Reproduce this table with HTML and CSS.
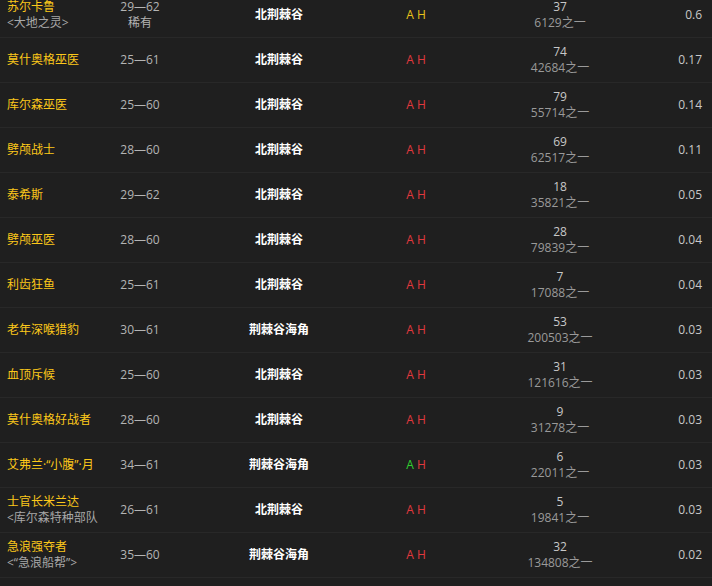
FILE: index.html
```html
<!DOCTYPE html>
<html lang="zh-CN">
<head>
  <meta charset="UTF-8">
  <title>掉落来源</title>
  <link rel="stylesheet" href="styles.css">
</head>
<body>
  <div class="list">
    <table class="drops">
      <tr class="first">
        <td class="name">苏尔卡鲁<div class="sub">&lt;大地之灵&gt;</div></td>
        <td class="level">29—62<div class="sub">稀有</div></td>
        <td class="zone">北荆棘谷</td>
        <td class="react"><span class="y">A</span> <span class="y">H</span></td>
        <td class="count">37<div class="sub">6129之一</div></td>
        <td class="pct">0.6</td>
      </tr>
      <tr>
        <td class="name">莫什奥格巫医</td>
        <td class="level">25—61</td>
        <td class="zone">北荆棘谷</td>
        <td class="react"><span class="r">A</span> <span class="r">H</span></td>
        <td class="count">74<div class="sub">42684之一</div></td>
        <td class="pct">0.17</td>
      </tr>
      <tr>
        <td class="name">库尔森巫医</td>
        <td class="level">25—60</td>
        <td class="zone">北荆棘谷</td>
        <td class="react"><span class="r">A</span> <span class="r">H</span></td>
        <td class="count">79<div class="sub">55714之一</div></td>
        <td class="pct">0.14</td>
      </tr>
      <tr>
        <td class="name">劈颅战士</td>
        <td class="level">28—60</td>
        <td class="zone">北荆棘谷</td>
        <td class="react"><span class="r">A</span> <span class="r">H</span></td>
        <td class="count">69<div class="sub">62517之一</div></td>
        <td class="pct">0.11</td>
      </tr>
      <tr>
        <td class="name">泰希斯</td>
        <td class="level">29—62</td>
        <td class="zone">北荆棘谷</td>
        <td class="react"><span class="r">A</span> <span class="r">H</span></td>
        <td class="count">18<div class="sub">35821之一</div></td>
        <td class="pct">0.05</td>
      </tr>
      <tr>
        <td class="name">劈颅巫医</td>
        <td class="level">28—60</td>
        <td class="zone">北荆棘谷</td>
        <td class="react"><span class="r">A</span> <span class="r">H</span></td>
        <td class="count">28<div class="sub">79839之一</div></td>
        <td class="pct">0.04</td>
      </tr>
      <tr>
        <td class="name">利齿狂鱼</td>
        <td class="level">25—61</td>
        <td class="zone">北荆棘谷</td>
        <td class="react"><span class="r">A</span> <span class="r">H</span></td>
        <td class="count">7<div class="sub">17088之一</div></td>
        <td class="pct">0.04</td>
      </tr>
      <tr>
        <td class="name">老年深喉猎豹</td>
        <td class="level">30—61</td>
        <td class="zone">荆棘谷海角</td>
        <td class="react"><span class="r">A</span> <span class="r">H</span></td>
        <td class="count">53<div class="sub">200503之一</div></td>
        <td class="pct">0.03</td>
      </tr>
      <tr>
        <td class="name">血顶斥候</td>
        <td class="level">25—60</td>
        <td class="zone">北荆棘谷</td>
        <td class="react"><span class="r">A</span> <span class="r">H</span></td>
        <td class="count">31<div class="sub">121616之一</div></td>
        <td class="pct">0.03</td>
      </tr>
      <tr>
        <td class="name">莫什奥格好战者</td>
        <td class="level">28—60</td>
        <td class="zone">北荆棘谷</td>
        <td class="react"><span class="r">A</span> <span class="r">H</span></td>
        <td class="count">9<div class="sub">31278之一</div></td>
        <td class="pct">0.03</td>
      </tr>
      <tr>
        <td class="name">艾弗兰·“小腹”·月</td>
        <td class="level">34—61</td>
        <td class="zone">荆棘谷海角</td>
        <td class="react"><span class="g">A</span> <span class="r">H</span></td>
        <td class="count">6<div class="sub">22011之一</div></td>
        <td class="pct">0.03</td>
      </tr>
      <tr>
        <td class="name">士官长米兰达<div class="sub">&lt;库尔森特种部队</div></td>
        <td class="level">26—61</td>
        <td class="zone">北荆棘谷</td>
        <td class="react"><span class="r">A</span> <span class="r">H</span></td>
        <td class="count">5<div class="sub">19841之一</div></td>
        <td class="pct">0.03</td>
      </tr>
      <tr>
        <td class="name">急浪强夺者<div class="sub">&lt;“急浪船帮”&gt;</div></td>
        <td class="level">35—60</td>
        <td class="zone">荆棘谷海角</td>
        <td class="react"><span class="r">A</span> <span class="r">H</span></td>
        <td class="count">32<div class="sub">134808之一</div></td>
        <td class="pct">0.02</td>
      </tr>
    </table>
  </div>
</body>
</html>
```

FILE: styles.css
```css
body {
  margin: 0;
  background-color: #1f1f1f;
  font-family: "Open Sans", "Noto Sans CJK SC", sans-serif;
  font-size: 12px;
  overflow: hidden;
}
.list {
  margin-top: -6px;
}
.drops {
  width: 712px;
  border-collapse: collapse;
  table-layout: fixed;
}
.drops tr {
  height: 45px;
  border-bottom: 1px solid #282828;
}
.drops tr.first {
  height: 43px;
}
.drops td {
  padding: 0;
  line-height: 16px;
  vertical-align: middle;
  white-space: nowrap;
  overflow: hidden;
}
.sub {
  color: #a8a8a8;
}
.name {
  width: 98px;
  padding-left: 7px !important;
  color: #fcc81a;
}
.level {
  width: 70px;
  text-align: center;
  color: #b4b4b4;
}
.level .sub {
  color: #b4b4b4;
}
.zone {
  width: 208px;
  text-align: center;
  color: #fff;
  font-weight: bold;
}
.react {
  width: 66px;
  text-align: center;
}
.r { color: #e0393e; }
.y { color: #e8c21a; }
.g { color: #2fd12f; }
.count {
  text-align: center;
  color: #c8c8c8;
}
.count .sub {
  color: #9a9a9a;
}
.pct {
  width: 31px;
  padding-right: 10px !important;
  text-align: right;
  color: #c8c8c8;
}
```
